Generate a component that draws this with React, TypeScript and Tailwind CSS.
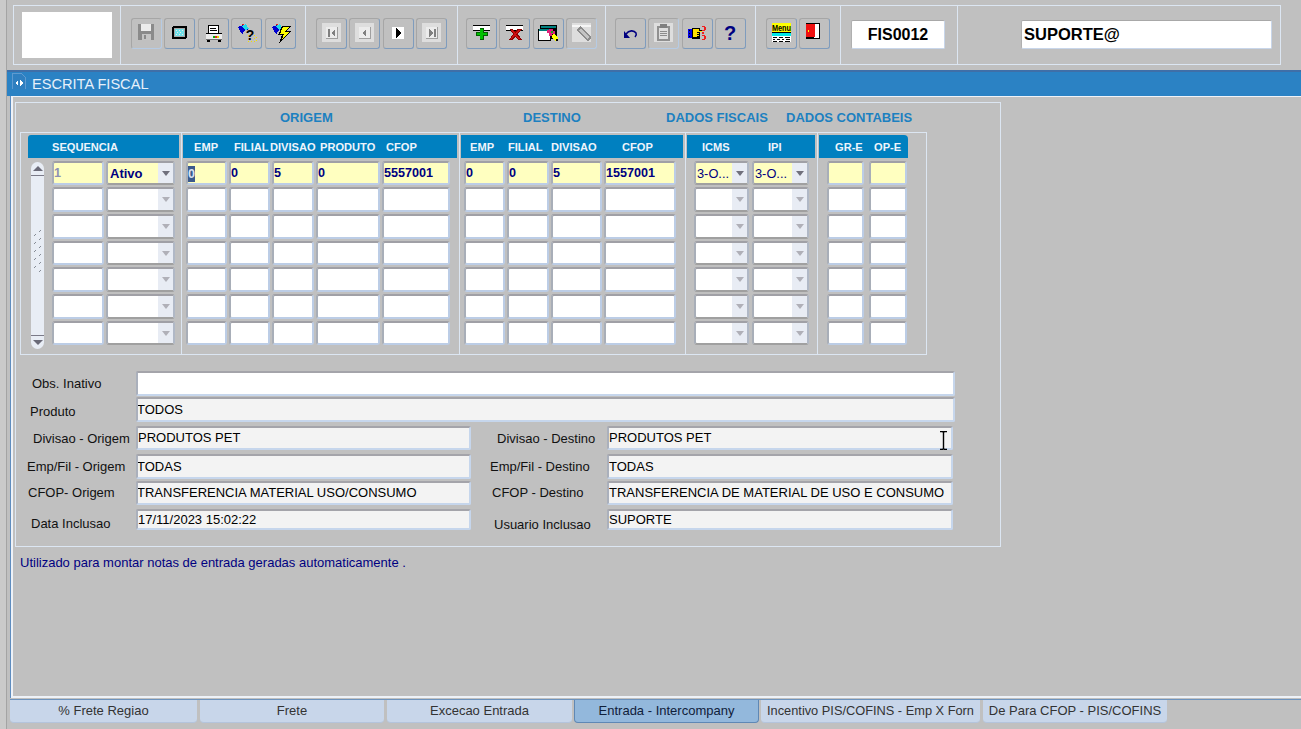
import type { ReactNode } from "react"

const font = "font-['Liberation_Sans',Arial,sans-serif]"

function Ico({ children }: { children: ReactNode }) {
  return (
    <svg width="24" height="24" viewBox="0 0 24 24" shapeRendering="crispEdges" className="block">
      {children}
    </svg>
  )
}

const SaveIcon = () => (
  <Ico>
    <rect x="3" y="3" width="16" height="16" fill="#8a8a8a" />
    <rect x="6" y="3" width="10" height="7" fill="#ececec" />
    <rect x="7" y="13" width="9" height="6" fill="#c4c4c4" />
    <rect x="9" y="14" width="2" height="4" fill="#8a8a8a" />
  </Ico>
)

const WindowIcon = () => (
  <Ico>
    <rect x="4" y="5" width="15" height="13" rx="2" fill="#000" />
    <rect x="6" y="7" width="11" height="9" fill="#a8a8a8" />
    <rect x="7" y="8" width="9" height="7" fill="#6fe0e8" />
    <path d="M8 9h1v1H8zM11 9h1v1h-1zM14 9h1v1h-1zM9 11h1v1H9zM12 11h1v1h-1zM8 13h1v1H8zM11 13h1v1h-1zM14 13h1v1h-1z" fill="#e8e8e8" />
  </Ico>
)

const PrinterIcon = () => (
  <Ico>
    <rect x="6" y="4" width="11" height="9" fill="#000" />
    <rect x="7" y="5" width="9" height="8" fill="#fff" />
    <path d="M8 7h6v1H8zM8 9h7v1H8z" fill="#000" />
    <rect x="4" y="12" width="16" height="7" fill="#ececec" />
    <rect x="4" y="12" width="16" height="1" fill="#000" />
    <rect x="4" y="18" width="16" height="1" fill="#707070" />
    <rect x="11" y="15" width="2" height="2" fill="#00b000" />
    <rect x="13" y="15" width="2" height="2" fill="#e02020" />
    <rect x="15" y="15" width="2" height="2" fill="#e0d000" />
    <rect x="5" y="19" width="3" height="2" fill="#000" />
    <rect x="16" y="19" width="3" height="2" fill="#000" />
  </Ico>
)

const Funnel = () => (
  <>
    <path d="M3 6l8-3 3 5-5 2-1 3-2-1z" fill="#0000d0" />
    <path d="M7 5l4-2 3 5-4 1z" fill="#20d8e8" />
    <path d="M7 3h2v1H7z" fill="#e02020" />
  </>
)

const QueryIcon = () => (
  <Ico>
    <Funnel />
    <path d="M13 14h1v1h-1zM16 20h1v1h-1zM19 14h1v1h-1zM19 17h1v1h-1zM19 20h1v1h-1zM13 20h1v1h-1zM21 16h1v1h-1zM21 19h1v1h-1zM14 18h1v1h-1z" fill="#f0e000" />
    <text x="15" y="19" textAnchor="middle" fontSize="14" fontWeight="700" fontFamily="Liberation Sans" fill="#000">?</text>
  </Ico>
)

const BoltIcon = () => (
  <Ico>
    <Funnel />
    <path d="M13 5h9l-4 5h4L10 23l3-9H9z" fill="#000" />
    <path d="M14 6h6l-4 5h4l-7 8 2-6h-4z" fill="#ffff00" />
  </Ico>
)

function NavIcon({ dir, active }: { dir: "first" | "prev" | "next" | "last"; active?: boolean }) {
  const c = active ? "#000" : "#808080"
  return (
    <Ico>
      {!active && <rect x="2" y="2" width="19" height="19" fill="#dedede" />}
      <rect x={active ? 5 : 6} y="6" width="12" height="12" fill={active ? "#fff" : "#ececec"} />
      {!active && <path d="M6 18h12V6h-1v11H6z" fill="#a0a0a0" />}
      {dir === "first" && <path d="M8 8h2v8H8zM15 8v8l-4-4z" fill={c} />}
      {dir === "prev" && <path d="M13 8v8l-4-4z" fill={c} />}
      {dir === "next" && <path d="M9 7v10l6-5z" fill={c} />}
      {dir === "last" && <path d="M14 8h2v8h-2zM9 8v8l4-4z" fill={c} />}
    </Ico>
  )
}

const PlusIcon = () => (
  <Ico>
    <rect x="3" y="4" width="17" height="6" fill="#000" />
    <rect x="3" y="5" width="17" height="4" fill="#fff" />
    <rect x="10" y="7" width="4" height="12" fill="#006000" />
    <rect x="6" y="11" width="12" height="4" fill="#006000" />
    <rect x="10" y="8" width="3" height="10" fill="#00c000" />
    <rect x="7" y="12" width="10" height="2" fill="#00c000" />
  </Ico>
)

const DeleteIcon = () => (
  <Ico>
    <rect x="3" y="4" width="17" height="6" fill="#000" />
    <rect x="3" y="5" width="17" height="4" fill="#fff" />
    <path d="M7 8h3l2 3 2-3h5l-4 5 4 6h-4l-3-3-3 3H6l4-6z" fill="#900000" />
    <path d="M8 9h2l2 3 3-3h2l-4 4 4 5h-2l-3-4-3 4H8l3-5z" fill="#d01010" />
  </Ico>
)

const EditIcon = () => (
  <Ico>
    <rect x="3" y="4" width="17" height="14" fill="#000" />
    <rect x="4" y="5" width="15" height="2" fill="#008080" />
    <rect x="1" y="8" width="13" height="12" fill="#000" />
    <rect x="2" y="10" width="11" height="9" fill="#fff" />
    <rect x="2" y="8" width="12" height="2" fill="#008080" />
    <path d="M12 8h4v2h2v3h-3v2h-3v-3h-2V9h2z" fill="#e0207a" />
    <path d="M14 10h2v2h-2z" fill="#20a020" />
    <path d="M16 13h2l3 4v3h-3l-3-4z" fill="#ffff00" />
    <path d="M19 18h2v2h-2z" fill="#000" />
  </Ico>
)

const PencilOff = () => (
  <Ico>
    <rect x="2" y="2" width="19" height="19" fill="#dedede" />
    <rect x="2" y="4" width="19" height="2" fill="#f6f6f6" />
    <path d="M6 9l4-4 11 11v1l-3 3h-1z" fill="#8c8c8c" />
    <path d="M9 9l2-2 8 9-2 2z" fill="#c4c4c4" />
  </Ico>
)

const UndoIcon = () => (
  <Ico>
    <svg x="0" y="0" width="24" height="24" viewBox="0 0 24 24" shapeRendering="auto">
      <path d="M7 13c3-4 8-4 10-1 1 2 0 3-1 4" fill="none" stroke="#000080" strokeWidth="1.6" />
      <path d="M5 10v7h6z" fill="#000080" />
    </svg>
  </Ico>
)

const ClipIcon = () => (
  <Ico>
    <rect x="2" y="2" width="19" height="19" fill="#dedede" />
    <rect x="5" y="5" width="13" height="15" rx="1" fill="#909090" />
    <rect x="7" y="7" width="9" height="11" fill="#dedede" />
    <rect x="8" y="3" width="7" height="4" fill="#808080" />
    <path d="M8 10h7v1H8zM8 12h7v1H8zM8 14h7v1H8z" fill="#8c8c8c" />
  </Ico>
)

const HandIcon = () => (
  <Ico>
    <rect x="2" y="8" width="4" height="9" fill="#0000e0" />
    <path d="M3 9h1v1H3zM3 12h1v1H3zM3 15h1v1H3z" fill="#000" />
    <rect x="6" y="7" width="8" height="11" fill="#000" />
    <path d="M7 8h6v2h3v1h-5v1h2v1h-2v1h2v1h-2v1H7z" fill="#ffe000" />
    <rect x="14" y="9" width="3" height="1" fill="#000" />
    <path d="M16 5h3v1h1v3h-1v1h-3V9h2V6h-2zM16 14h3v1h1v3h-1v1h-3v-1h2v-3h-2zM16 11h2v2h-2z" fill="#f02020" />
  </Ico>
)

const HelpIcon = () => (
  <Ico>
    <text x="11" y="19" textAnchor="middle" fontSize="20" fontWeight="700" fontFamily="Liberation Sans" fill="#000080">?</text>
  </Ico>
)

const MenuIcon = () => (
  <Ico>
    <rect x="2" y="2" width="19" height="9" fill="#ffff00" />
    <text x="2" y="10" fontSize="9" fontWeight="700" fontFamily="Liberation Sans" fill="#000" textLength="19" lengthAdjust="spacingAndGlyphs">Menu</text>
    <rect x="2" y="11" width="19" height="1" fill="#000" />
    <rect x="2" y="12" width="19" height="3" fill="#00e8e8" />
    <rect x="2" y="15" width="19" height="6" fill="#fff" />
    <path d="M3 16h4v1H3zM9 16h4v1H9zM15 16h5v1h-5zM3 18h2v1H3zM7 18h3v1H7zM12 18h2v1h-2zM16 18h4v1h-4zM3 20h4v1H3zM9 20h4v1H9zM15 20h5v1h-5z" fill="#000" />
  </Ico>
)

const ExitIcon = () => (
  <Ico>
    <rect x="3" y="2" width="14" height="16" fill="#000" />
    <rect x="11" y="3" width="5" height="14" fill="#fff" />
    <rect x="3" y="3" width="9" height="13" fill="#f01010" />
    <rect x="5" y="9" width="1" height="2" fill="#ffff00" />
  </Ico>
)

function ToolButton({ icon, off, className = "" }: { icon: ReactNode; off?: boolean; className?: string }) {
  return (
    <div
      className={`w-[31px] h-[31px] shrink-0 rounded-[3px] border border-[#a6a6a6] pl-[3px] pt-[2px] ${
        off ? "border-r-[#b6cbe4] border-b-[#b6cbe4]" : "border-r-[#7f9cbd] border-b-[#7f9cbd]"
      } ${className}`}
    >
      {icon}
    </div>
  )
}

function ToolCell({ className, children }: { className: string; children: ReactNode }) {
  return <div className={`h-full border-r border-[#dce6f2] flex gap-[2.4px] pt-[12px] ${className}`}>{children}</div>
}

function Toolbar() {
  return (
    <div className="ml-[6px] mt-[5px] w-[1268px] h-[60px] border border-[#dce6f2] flex">
      <div className="w-[107px] h-full border-r border-[#dce6f2] pl-[8px] pt-[6px]">
        <div className="w-[90px] h-[46px] bg-white" />
      </div>
      <ToolCell className="w-[185px] pl-[10px]">
        <ToolButton off icon={<SaveIcon />} />
        <ToolButton icon={<WindowIcon />} />
        <ToolButton icon={<PrinterIcon />} />
        <ToolButton icon={<QueryIcon />} />
        <ToolButton icon={<BoltIcon />} />
      </ToolCell>
      <ToolCell className="w-[152px] pl-[10px]">
        <ToolButton icon={<NavIcon dir="first" />} />
        <ToolButton icon={<NavIcon dir="prev" />} />
        <ToolButton icon={<NavIcon dir="next" active />} />
        <ToolButton icon={<NavIcon dir="last" />} />
      </ToolCell>
      <ToolCell className="w-[148px] pl-[8px]">
        <ToolButton icon={<PlusIcon />} />
        <ToolButton icon={<DeleteIcon />} />
        <ToolButton icon={<EditIcon />} />
        <ToolButton off icon={<PencilOff />} />
      </ToolCell>
      <ToolCell className="w-[150px] pl-[9px]">
        <ToolButton icon={<UndoIcon />} />
        <ToolButton off icon={<ClipIcon />} />
        <ToolButton icon={<HandIcon />} />
        <ToolButton icon={<HelpIcon />} />
      </ToolCell>
      <ToolCell className="w-[85px] pl-[10px]">
        <ToolButton icon={<MenuIcon />} />
        <ToolButton icon={<ExitIcon />} />
      </ToolCell>
      <div className="w-[117px] h-full border-r border-[#dce6f2] pl-[10px] pt-[14px]">
        <div className="w-[94px] h-[29px] bg-white rounded-[2px] border border-[#c8d6ea] border-t-[#a8a8a8] border-l-[#b0b0b0] flex items-center justify-center text-[16px] font-bold text-black">
          FIS0012
        </div>
      </div>
      <div className="pl-[63px] pt-[14px]">
        <div className="w-[251px] h-[29px] bg-white rounded-[2px] border border-[#c8d6ea] border-t-[#a8a8a8] border-l-[#b0b0b0] flex items-center pl-[2px] text-[16.5px] font-bold text-black">
          SUPORTE@
        </div>
      </div>
    </div>
  )
}

const rowPitch = ["h-[26px]", "h-[27px]", "h-[27px]", "h-[26px]", "h-[27px]", "h-[27px]", "h-[24px]"]
const cellHeight = ["h-[24px]", "h-[25px]", "h-[25px]", "h-[24px]", "h-[25px]", "h-[25px]", "h-[24px]"]

const cellBase = "rounded-[3px] border-2 border-t-[#a0a0a6] border-l-[#a8aeb8] border-r-[#bccde6] border-b-[#bccde6] overflow-hidden"

function Cell({ cls, row, value, textCls = "text-[#000080]" }: { cls: string; row: number; value?: string; textCls?: string }) {
  return (
    <div
      className={`${cls} ${cellHeight[row]} ${cellBase} flex items-center pt-[1px] text-[12.6px] font-bold ${
        row === 0 ? "bg-[#ffffc0]" : "bg-white"
      } ${textCls}`}
    >
      {value}
    </div>
  )
}

function SelectCell({ cls, row, value, bold }: { cls: string; row: number; value?: string; bold?: boolean }) {
  return (
    <div
      className={`${cls} ${cellHeight[row]} rounded-[3px] border-2 border-t-[#a0a0a6] border-l-[#a8aeb8] border-r-[#b0b8c6] border-b-[#a0a0a0] overflow-hidden flex ${
        row === 0 ? "bg-[#ffffc0]" : "bg-white"
      }`}
    >
      <div
        className={`flex-1 min-w-0 flex items-center pt-[1px] text-[#000080] whitespace-nowrap ${
          bold ? "font-bold pl-[2px] text-[13px]" : "pl-[1px] text-[12.8px]"
        }`}
      >
        {value}
      </div>
      <div className="w-[15px] bg-[#e8ecf4] flex items-center justify-center">
        <div
          className={`w-0 h-0 border-x-[4.5px] border-x-transparent border-t-[5px] ${
            row === 0 ? "border-t-[#70707c]" : "border-t-[#b0b0b8]"
          }`}
        />
      </div>
    </div>
  )
}

function Head({ cls, children }: { cls: string; children: ReactNode }) {
  return <div className={`h-[23px] pt-[1px] bg-[#0080c0] flex items-center text-[11.1px] font-bold text-[#eef4fb] whitespace-nowrap ${cls}`}>{children}</div>
}

const rows = [0, 1, 2, 3, 4, 5, 6]

function Scrollbar() {
  return (
    <div className="ml-[10px] w-[13px] h-[187px] mt-[1px] bg-[#e8edf5] rounded-[7px] flex flex-col items-center">
      <div className="h-[14px] w-full border-b border-[#7a7a88] flex items-center justify-center">
        <div className="w-0 h-0 border-x-[5px] border-x-transparent border-b-[5px] border-b-[#6a6a78]" />
      </div>
      <svg width="11" height="44" viewBox="0 0 11 44" shapeRendering="crispEdges" className="mt-[54px] mb-auto">
        <path
          d="M8 0h1v1H8zM7 1h1v1H7zM3 4h1v1H3zM2 5h1v1H2zM8 8h1v1H8zM7 9h1v1H7zM3 12h1v1H3zM2 13h1v1H2zM8 16h1v1H8zM7 17h1v1H7zM3 20h1v1H3zM2 21h1v1H2zM8 24h1v1H8zM7 25h1v1H7zM3 28h1v1H3zM2 29h1v1H2zM8 32h1v1H8zM7 33h1v1H7zM3 36h1v1H3zM2 37h1v1H2zM8 40h1v1H8zM7 41h1v1H7z"
          fill="#868c96"
        />
      </svg>
      <div className="h-[14px] w-full border-t border-[#7a7a88] flex items-center justify-center">
        <div className="w-0 h-0 border-x-[5px] border-x-transparent border-t-[5px] border-t-[#6a6a78]" />
      </div>
    </div>
  )
}

function GridBlock() {
  return (
    <div className="ml-[4px] w-[907px] h-[223px] border border-[#dce6f2] flex">
      {/* sequencia */}
      <div className="w-[161px] h-full border-r border-[#dce6f2] pt-[2px]">
        <Head cls="ml-[7px] w-[151px] pl-[24px] rounded-tl-[3px]">SEQUENCIA</Head>
        <div className="flex mt-[3px]">
          <Scrollbar />
          <div>
            {rows.map((r) => (
              <div key={r} className={`flex ${rowPitch[r]}`}>
                <Cell cls="ml-[8px] w-[52px]" row={r} value={r === 0 ? "1" : undefined} textCls="text-[#8c90b4]" />
                <SelectCell cls="ml-[2px] w-[69px]" row={r} value={r === 0 ? "Ativo" : undefined} bold />
              </div>
            ))}
          </div>
        </div>
      </div>

      {/* origem */}
      <div className="w-[278px] h-full border-r border-[#dce6f2] pt-[2px]">
        <Head cls="ml-[1px] w-[274px] pl-[11px]">
          <span className="w-[40px]">EMP</span>
          <span className="w-[36px]">FILIAL</span>
          <span className="w-[50px]">DIVISAO</span>
          <span className="w-[66px]">PRODUTO</span>
          <span>CFOP</span>
        </Head>
        <div className="mt-[3px]">
          {rows.map((r) => (
            <div key={r} className={`flex ${rowPitch[r]}`}>
              <div className={`ml-[4px] w-[41px] ${cellHeight[r]} ${cellBase} flex items-center pt-[1px] text-[12.6px] font-bold text-[#000080] ${r === 0 ? "bg-[#ffffc0]" : "bg-white"}`}>
                {r === 0 && <span className="bg-[#3c5a8c] text-[#d8e0f0] leading-[16px] w-[7px]">0</span>}
              </div>
              <Cell cls="ml-[2px] w-[41px]" row={r} value={r === 0 ? "0" : undefined} />
              <Cell cls="ml-[2px] w-[42px]" row={r} value={r === 0 ? "5" : undefined} />
              <Cell cls="ml-[2px] w-[64px]" row={r} value={r === 0 ? "0" : undefined} />
              <Cell cls="ml-[2px] w-[68px]" row={r} value={r === 0 ? "5557001" : undefined} />
            </div>
          ))}
        </div>
      </div>

      {/* destino */}
      <div className="w-[226px] h-full border-r border-[#dce6f2] pt-[2px]">
        <Head cls="ml-[1px] w-[222px] pl-[9px]">
          <span className="w-[38px]">EMP</span>
          <span className="w-[43px]">FILIAL</span>
          <span className="w-[71px]">DIVISAO</span>
          <span>CFOP</span>
        </Head>
        <div className="mt-[3px]">
          {rows.map((r) => (
            <div key={r} className={`flex ${rowPitch[r]}`}>
              <Cell cls="ml-[4px] w-[41px]" row={r} value={r === 0 ? "0" : undefined} />
              <Cell cls="ml-[2px] w-[42px]" row={r} value={r === 0 ? "0" : undefined} />
              <Cell cls="ml-[2px] w-[51px]" row={r} value={r === 0 ? "5" : undefined} />
              <Cell cls="ml-[2px] w-[72px]" row={r} value={r === 0 ? "1557001" : undefined} />
            </div>
          ))}
        </div>
      </div>

      {/* dados fiscais */}
      <div className="w-[132px] h-full border-r border-[#dce6f2] pt-[2px]">
        <Head cls="ml-[1px] w-[128px] pl-[15px]">
          <span className="w-[66px]">ICMS</span>
          <span>IPI</span>
        </Head>
        <div className="mt-[3px]">
          {rows.map((r) => (
            <div key={r} className={`flex ${rowPitch[r]}`}>
              <SelectCell cls="ml-[8px] w-[55px]" row={r} value={r === 0 ? "3-O..." : undefined} />
              <SelectCell cls="ml-[3px] w-[57px]" row={r} value={r === 0 ? "3-O..." : undefined} />
            </div>
          ))}
        </div>
      </div>

      {/* dados contabeis */}
      <div className="flex-1 h-full pt-[2px]">
        <Head cls="ml-[1px] w-[89px] pl-[16px] rounded-tr-[4px]">
          <span className="w-[39px]">GR-E</span>
          <span>OP-E</span>
        </Head>
        <div className="mt-[3px]">
          {rows.map((r) => (
            <div key={r} className={`flex ${rowPitch[r]}`}>
              <Cell cls="ml-[9px] w-[37px]" row={r} />
              <Cell cls="ml-[5px] w-[38px]" row={r} />
            </div>
          ))}
        </div>
      </div>
    </div>
  )
}

const fieldBase = "rounded-[2px] border-2 border-t-[#a4a4aa] border-l-[#aab0bc] border-r-[#c6d6ec] border-b-[#c6d6ec] text-[13px] text-black flex items-center whitespace-nowrap overflow-hidden"

function Field({ cls, value, white }: { cls: string; value?: string; white?: boolean }) {
  return <div className={`${fieldBase} ${white ? "bg-white" : "bg-[#f3f3f3]"} ${cls}`}>{value}</div>
}

function Label({ cls, text }: { cls: string; text: string }) {
  return <div className={`flex items-center text-[13px] text-[#111] whitespace-nowrap ${cls}`}>{text}</div>
}

function FormBlock() {
  return (
    <div className="mt-[16px]">
      <div className="flex h-[26px]">
        <Label cls="w-[120px] pl-[16px] h-[25px] pt-[1px]" text="Obs. Inativo" />
        <Field cls="w-[819px] h-[25px]" white />
      </div>
      <div className="flex h-[29px]">
        <Label cls="w-[120px] pl-[14px] h-[25px] pt-[5px]" text="Produto" />
        <Field cls="w-[819px] h-[25px] indent-[-1px]" value="TODOS" />
      </div>
      <div className="flex h-[28px]">
        <Label cls="w-[120px] pl-[17px] h-[24px] pt-[2px]" text="Divisao - Origem" />
        <Field cls="w-[335px] h-[24px]" value="PRODUTOS PET" />
        <Label cls="w-[136px] pl-[26px] h-[24px] pt-[2px]" text="Divisao - Destino" />
        <Field cls="w-[346px] h-[24px]" value="PRODUTOS PET" />
      </div>
      <div className="flex h-[27px]">
        <Label cls="w-[120px] pl-[11px] h-[25px]" text="Emp/Fil - Origem" />
        <Field cls="w-[335px] h-[25px] indent-[-1px]" value="TODAS" />
        <Label cls="w-[136px] pl-[19px] h-[25px]" text="Emp/Fil - Destino" />
        <Field cls="w-[346px] h-[25px]" value="TODAS" />
      </div>
      <div className="flex h-[28px]">
        <Label cls="w-[120px] pl-[12px] h-[24px]" text="CFOP- Origem" />
        <Field cls="w-[335px] h-[24px] indent-[-1px]" value="TRANSFERENCIA MATERIAL USO/CONSUMO" />
        <Label cls="w-[136px] pl-[21px] h-[24px]" text="CFOP - Destino" />
        <Field cls="w-[346px] h-[24px]" value="TRANSFERENCIA DE MATERIAL DE USO E CONSUMO" />
      </div>
      <div className="flex h-[21px]">
        <Label cls="w-[120px] pl-[15px] h-[21px] pt-[8px]" text="Data Inclusao" />
        <Field cls="w-[335px] h-[21px]" value="17/11/2023 15:02:22" />
        <Label cls="w-[136px] pl-[23px] h-[21px] pt-[11px]" text="Usuario Inclusao" />
        <Field cls="w-[346px] h-[21px]" value="SUPORTE" />
      </div>
    </div>
  )
}

const tabs = [
  { label: "% Frete Regiao", cls: "w-[187px]" },
  { label: "Frete", cls: "w-[184px] ml-[3px]" },
  { label: "Excecao Entrada", cls: "w-[185px] ml-[3px]" },
  { label: "Entrada - Intercompany", cls: "w-[185px] ml-[2px]", active: true },
  { label: "Incentivo PIS/COFINS - Emp X Forn", cls: "w-[219px] ml-[2px] text-[12.8px]" },
  { label: "De Para CFOP - PIS/COFINS", cls: "w-[184px] ml-[3px]" },
]

export default function App() {
  return (
    <div className={`relative w-[1301px] h-[729px] overflow-hidden bg-[#c0c0c0] flex ${font}`}>
      <div className="w-[7px] h-full bg-[#cacaca] border-r border-[#a4a4a4]" />
      <div className="flex-1 min-w-0">
        <Toolbar />

        {/* barra de titulo */}
        <div className="mt-[5px] h-[26px] bg-[#2b82c4] border-t-2 border-[#3f6fa8] flex items-center">
          <svg width="14" height="16" viewBox="0 0 14 16" shapeRendering="crispEdges" className="ml-[5px] self-start mt-[1px]">
            <path d="M0 0h9l4 4v12H0z" fill="#2f7fc0" stroke="#5f9ad0" strokeWidth="1" />
            <path d="M3 10l3-3v6zM11 10L8 7v6z" fill="#fff" />
          </svg>
          <span className="ml-[6px] pt-[1px] text-[14.6px] text-[#e6f0fa]">ESCRITA FISCAL</span>
        </div>

        <div className="ml-[3px] h-[602px] border-l border-[#5f8dbf]">
          <div className="h-full border-l-2 border-t border-b-2 border-[#eef2f8] pl-[2px] pt-[5px]">
            <div className="w-[986px] h-[445px] border border-[#dce6f2]">
              <div className="h-[29px] flex items-center pl-[264px] text-[13px] font-bold text-[#1c80c0] whitespace-nowrap pt-[1px]">
                <span className="w-[243px]">ORIGEM</span>
                <span className="w-[143px]">DESTINO</span>
                <span className="w-[120px]">DADOS FISCAIS</span>
                <span>DADOS CONTABEIS</span>
              </div>
              <GridBlock />
              <FormBlock />
            </div>
            <p className="ml-[5px] mt-[8px] text-[13px] leading-[15px] text-[#000080]">
              Utilizado para montar notas de entrada geradas automaticamente .
            </p>
          </div>
        </div>

        {/* abas */}
        <div className="ml-[3px] mt-[1px] border-t border-[#6d93bd] flex h-[24px] text-[13px] whitespace-nowrap">
          {tabs.map((t) => (
            <div
              key={t.label}
              className={`${t.cls} h-[23px] rounded-b-[4px] flex items-center justify-center border-b ${
                t.active
                  ? "bg-[#93b8dc] text-[#10203a] border-x border-[#5f88b5] border-b-[#5f88b5]"
                  : "bg-[#c8d6ea] text-[#333] border-[#b4c4dc]"
              }`}
            >
              {t.label}
            </div>
          ))}
        </div>
      </div>

      {/* cursor de texto sobre o campo */}
      <svg width="9" height="19" viewBox="0 0 9 19" className="absolute left-[939px] top-[431px]">
        <path d="M1 .5h2.5l1 1 1-1H8M4.5 1.5v16M1 18.5h2.5l1-1 1 1H8" fill="none" stroke="#000" strokeWidth="1.4" />
      </svg>
    </div>
  )
}
